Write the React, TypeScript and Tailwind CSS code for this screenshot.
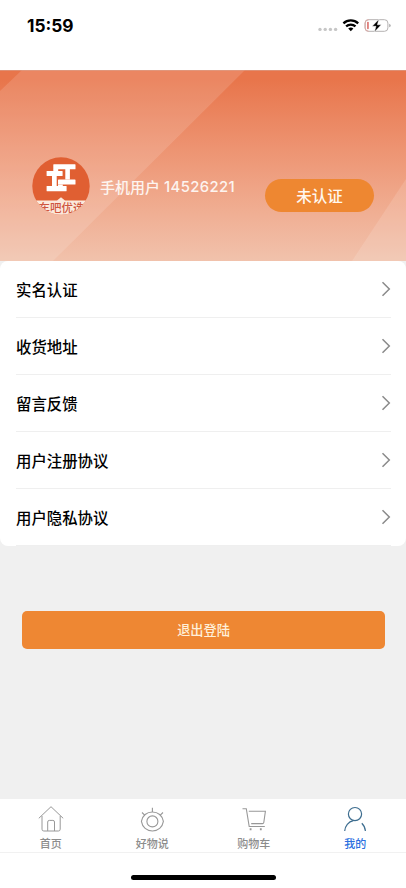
import { useState } from "react";
import type { ReactNode } from "react";

type MenuRowProps = {
  label: string;
};

type TabProps = {
  label: string;
  active: boolean;
  icon: ReactNode;
  onSelect: () => void;
};

const menu = ["实名认证", "收货地址", "留言反馈", "用户注册协议", "用户隐私协议"];

const tabs = [
  { label: "首页", icon: <HomeIcon /> },
  { label: "好物说", icon: <EyeIcon /> },
  { label: "购物车", icon: <CartIcon /> },
  { label: "我的", icon: <UserIcon /> },
];

function HomeIcon() {
  return (
    <svg width="28" height="28" viewBox="0 0 28 28" fill="none" stroke="#989898" strokeWidth="1">
      <path d="M1.8 14.3 14 2.7l12.2 11.6" />
      <path d="M5 12v13.2q0 1.8 1.8 1.8h14.6q1.8 0 1.8-1.8V12" />
      <path d="M10.7 27V18q0-1.6 1.6-1.6h3.6q1.6 0 1.6 1.6v9" />
    </svg>
  );
}

function EyeIcon() {
  return (
    <svg width="28" height="28" viewBox="0 0 28 28" fill="none" stroke="#989898" strokeWidth="1.1">
      <path d="M3.4 17.4C4.3 11.600 8.800 8 14.400 8s10.100 3.600 11 9.400C24.500 23.200 20 27 14.400 27S4.300 23.200 3.400 17.400Z" />
      <circle cx="14.400" cy="17.400" r="5.500" />
      <path d="M14.400 3.800V8M4 8.500 6.900 11.300M25 8.500 22 11.300" />
    </svg>
  );
}

function CartIcon() {
  return (
    <svg width="28" height="28" viewBox="0 0 28 28" fill="none" stroke="#989898" strokeWidth="1.1">
      <path d="M2.500 4.700h3.800L9.200 22.500h15.600" />
      <path d="M8.800 7.300h16.600L23.800 18.500q-.2 1.100-1.400 1.100H11.200" />
      <path d="M10.600 24.300v2M20.800 24.300v2" strokeWidth="1.800" />
    </svg>
  );
}

function UserIcon() {
  return (
    <svg width="28" height="28" viewBox="0 0 28 28" fill="none" stroke="#3d6d8f" strokeWidth="1.200">
      <circle cx="14" cy="10.100" r="6.600" />
      <path d="M3.700 27c.3-5 3.700-9.400 8.700-10.300M20.800 19.200c2.100 2 3.300 4.700 3.600 7.800" />
    </svg>
  );
}

function StatusBar() {
  return (
    <div className="flex h-[70px] items-start justify-between bg-white pt-[16px] pr-[14px] pl-[27px]">
      <span className="font-[Inter] text-[17.300px] leading-[19px] font-bold text-black">15:59</span>
      <svg width="75" height="20" viewBox="0 0 75 20">
        <g fill="#c6c6c6">
          <circle cx="3" cy="13.400" r="1.700" />
          <circle cx="8.200" cy="13.400" r="1.700" />
          <circle cx="13.400" cy="13.400" r="1.700" />
          <circle cx="18.600" cy="13.400" r="1.700" />
        </g>
        <g fill="none" stroke="#000" strokeWidth="2.300">
          <path d="M26.400 7.400a10.800 10.800 0 0 1 14.800 0" />
          <path d="M29.100 10.400a7 7 0 0 1 9.400 0" />
        </g>
        <path d="M31.200 12.600a4 4 0 0 1 5.200 0l-2.600 2.700z" />
        <rect x="48.100" y="3.700" width="22.800" height="11.600" rx="3.400" fill="none" stroke="#b5b2b2" />
        <path d="M52 3.700h-.6q-3.300 0-3.300 3.300v5q0 3.300 3.300 3.300h.6" fill="none" stroke="#dbaaa6" />
        <rect x="50.200" y="5.800" width="1.500" height="7.400" rx=".7" fill="#d96560" />
        <path d="M72.200 7.700q1.500.4 1.500 1.800t-1.500 1.800z" fill="#aaa" />
        <path d="M61.900 3.200 55.200 10.300h3.800l-1.600 5.700 6.900-7.200h-3.900z" stroke="#fff" strokeWidth=".5" />
      </svg>
    </div>
  );
}

function Avatar() {
  return (
    <svg className="mt-[87px] shrink-0" width="58" height="58" viewBox="0 0 58 58">
      <defs>
        <clipPath id="avatar">
          <circle cx="29" cy="29" r="28.700" />
        </clipPath>
      </defs>
      <g clipPath="url(#avatar)">
        <rect width="58" height="58" fill="#e05f32" />
        <path d="M0 43.500h25l4-3.300 4 3.300h25V58H0z" fill="#fbe9dc" />
        <g fill="#fff">
          <rect x="21.300" y="7.200" width="22.200" height="5.100" rx=".6" />
          <rect x="14.600" y="13.900" width="16" height="5.100" rx=".6" />
          <rect x="26" y="22.400" width="17.500" height="5.200" rx=".6" />
          <rect x="14.600" y="29" width="20" height="5.300" rx=".6" />
          <path d="M21.300 12h4.900v2.200h-4.900zM33.300 12h4.600v10.600h-4.600zM20 18.800h4.700v10.400H20zM26 27.400h4.800v1.800H26z" />
        </g>
        <text
          x="29.500"
          y="55"
          textAnchor="middle"
          fill="#cf563f"
          className="font-['Noto_Sans_CJK_SC',sans-serif] text-[11.500px] font-medium"
        >
          车吧优选
        </text>
      </g>
    </svg>
  );
}

function ProfileHeader() {
  return (
    <header className="relative flex h-[191px] items-start bg-linear-to-b from-[#e8754b] from-5% to-[#f1c2ac] pl-[32px]">
      <svg className="absolute inset-0" width="406" height="191" viewBox="0 0 406 191">
        <path d="M22 0h223L53 191H0V21z" fill="#fff" opacity=".13" />
        <path d="M406 109v82h-54z" fill="#fff" opacity=".13" />
        <path d="M0 .5h406" stroke="#d9a18e" opacity=".6" />
      </svg>
      <div className="relative flex w-full">
        <Avatar />
        <p className="mt-[106px] ml-[10px] flex gap-[4px] text-[15px] leading-[22px] font-medium whitespace-nowrap text-[#fdf4ef]">
          <span>手机用户</span>
          <span className="font-[Inter] text-[14.800px] tracking-[0.4px]">14526221</span>
        </p>
        <button
          type="button"
          className="mt-[109px] mr-[32px] ml-auto h-[33px] w-[109px] rounded-full bg-[#ee8731] text-[15.500px] font-medium text-[#fff8ef]"
        >
          未认证
        </button>
      </div>
    </header>
  );
}

function MenuRow({ label }: MenuRowProps) {
  return (
    <li className="mr-[15px] ml-[16px] flex h-[57px] items-center justify-between border-b border-[#efefef]">
      <span className="pt-px text-[15.400px] font-medium text-black">{label}</span>
      <svg width="10" height="16" viewBox="0 0 10 16" fill="none" stroke="#8a8a8a" strokeWidth="1.500">
        <path d="M1.500 1.300 8.300 8l-6.800 6.700" />
      </svg>
    </li>
  );
}

function Tab({ label, active, icon, onSelect }: TabProps) {
  return (
    <button type="button" onClick={onSelect} className="flex flex-1 flex-col items-center pt-[5px]">
      {icon}
      <span
        className={
          active
            ? "mt-[3px] text-[11px] leading-[16px] font-medium text-[#2a6fe0]"
            : "mt-[3px] text-[11px] leading-[16px] font-medium text-[#8c8c8c]"
        }
      >
        {label}
      </span>
    </button>
  );
}

export default function App() {
  const [current, setCurrent] = useState("我的");

  return (
    <div className="flex h-[888px] w-[406px] flex-col overflow-hidden bg-[#f0f0f0] font-['Noto_Sans_CJK_SC',sans-serif]">
      <StatusBar />
      <ProfileHeader />
      <ul className="rounded-[8px] bg-white">
        {menu.map((label) => (
          <MenuRow key={label} label={label} />
        ))}
      </ul>

      <button
        type="button"
        className="mt-[65px] mr-[21px] ml-[22px] h-[38px] rounded-[5px] bg-[#ee8733] text-[13.200px] font-medium text-[#fff0d9]"
      >
        退出登陆
      </button>

      <footer className="mt-auto h-[89px] bg-white">
        <nav className="flex h-[54px] border-b border-[#f1f1f1]">
          {tabs.map((tab) => (
            <Tab
              key={tab.label}
              label={tab.label}
              icon={tab.icon}
              active={tab.label === current}
              onSelect={() => setCurrent(tab.label)}
            />
          ))}
        </nav>
        <div className="mx-auto mt-[22px] h-[5px] w-[145px] rounded-full bg-black" />
      </footer>
    </div>
  );
}
